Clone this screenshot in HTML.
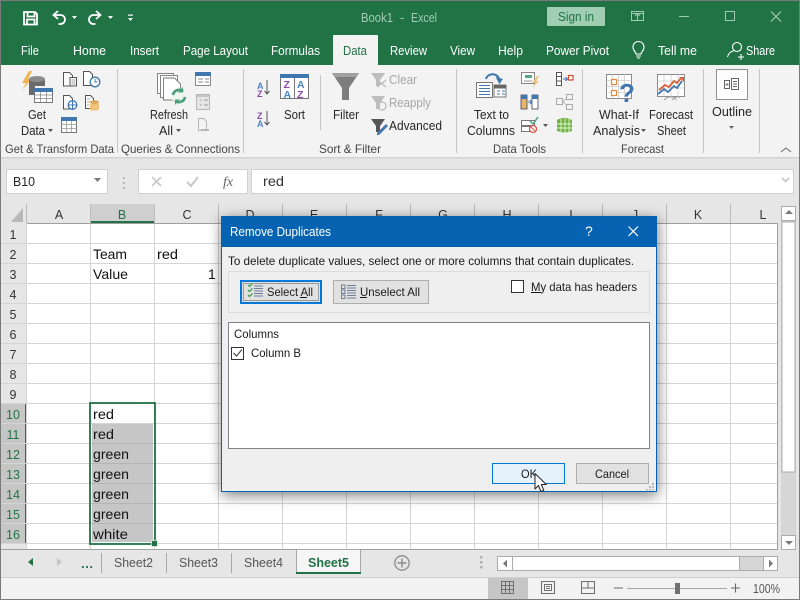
<!DOCTYPE html>
<html><head><meta charset="utf-8"><title>Book1 - Excel</title>
<style>
html,body{margin:0;padding:0;background:#e6e6e6;width:800px;height:600px;overflow:hidden}
svg{display:block;position:absolute;left:0;top:0}
text{font-family:"Liberation Sans",sans-serif;font-size:12.5px;fill:#262626;white-space:pre}
.t{fill:#fff}
.l{fill:#444}
.c{font-size:14px;fill:#111}
.h{fill:#333;text-anchor:middle;font-size:12.5px}
.g{fill:#a6a6a6}
.d{fill:#1a1a1a;font-size:12px}
</style></head><body>
<svg width="800" height="600" viewBox="0 0 800 600" xmlns="http://www.w3.org/2000/svg">
<!-- backgrounds -->
<rect width="800" height="600" fill="#e6e6e6"/>
<rect width="800" height="65" fill="#217346"/>
<rect y="65" width="800" height="92" fill="#f3f3f3"/>
<rect y="157" width="800" height="1.5" fill="#d2d2d2"/>
<rect x="333" y="35" width="45" height="30" fill="#f3f3f3"/>

<!-- QAT -->
<g fill="none" stroke="#fff" stroke-width="1.8">
<path d="M24 12h11l2 2v10.500H24z"/><path d="M27.500 12.500v4h7v-4M27 24.500v-5h7.500v5"/>
<path d="M58 11l-4.500 4 4.500 4M54 15h6.500a4.500 4.500 0 0 1 0 9h-2"/>
<path d="M96 11l4.500 4-4.500 4M100 15h-6.500a4.500 4.500 0 0 0 0 9h2"/>
</g>
<path d="M72 16h5l-2.500 3zM108 16h5l-2.500 3zM128 18h5l-2.500 3z" fill="#fff"/>
<rect x="128" y="14.500" width="5" height="1.200" fill="#fff"/>

<!-- title -->
<text x="361" y="22" textLength="32" lengthAdjust="spacingAndGlyphs" style="fill:#a3ccb5;font-size:13px">Book1</text>
<text x="400" y="22" style="fill:#a3ccb5;font-size:13px">-</text>
<text x="411" y="22" textLength="26" lengthAdjust="spacingAndGlyphs" style="fill:#a3ccb5;font-size:13px">Excel</text>
<rect x="547" y="7" width="58" height="19" rx="1" fill="#a0ceb3"/>
<text x="558" y="21" textLength="36" lengthAdjust="spacingAndGlyphs" style="fill:#217346;font-size:13px">Sign in</text>
<g fill="none" stroke="#a3ccb5" stroke-width="1">
<rect x="631.500" y="11.500" width="12" height="9"/><path d="M637.500 20v-6M635 16l2.500-2.500 2.500 2.500M631.500 13.500h12"/>
<path d="M679 16.500h10"/><rect x="725.500" y="11.500" width="9" height="9"/>
<path d="M771 11.500l10 10M781 11.500l-10 10" stroke-width="1.200"/>
</g>

<!-- tabs -->
<text class="t" x="21" y="55" textLength="18" lengthAdjust="spacingAndGlyphs" style="font-size:12.5px">File</text>
<text class="t" x="73" y="55" textLength="33" lengthAdjust="spacingAndGlyphs" style="font-size:12.5px">Home</text>
<text class="t" x="130" y="55" textLength="29" lengthAdjust="spacingAndGlyphs" style="font-size:12.5px">Insert</text>
<text class="t" x="183" y="55" textLength="65" lengthAdjust="spacingAndGlyphs" style="font-size:12.5px">Page Layout</text>
<text class="t" x="271" y="55" textLength="49" lengthAdjust="spacingAndGlyphs" style="font-size:12.5px">Formulas</text>
<text x="343" y="55" textLength="24" lengthAdjust="spacingAndGlyphs" style="fill:#217346;font-size:12.5px">Data</text>
<text class="t" x="390" y="55" textLength="37" lengthAdjust="spacingAndGlyphs" style="font-size:12.5px">Review</text>
<text class="t" x="450" y="55" textLength="25" lengthAdjust="spacingAndGlyphs" style="font-size:12.5px">View</text>
<text class="t" x="498" y="55" textLength="25" lengthAdjust="spacingAndGlyphs" style="font-size:12.5px">Help</text>
<text class="t" x="546" y="55" textLength="63" lengthAdjust="spacingAndGlyphs" style="font-size:12.5px">Power Pivot</text>
<text class="t" x="658" y="55" textLength="39" lengthAdjust="spacingAndGlyphs" style="font-size:12.5px">Tell me</text>
<text class="t" x="746" y="55" textLength="29" lengthAdjust="spacingAndGlyphs" style="font-size:12.5px">Share</text>
<g fill="none" stroke="#fff" stroke-width="1.100">
<path d="M636 54c0-2-3-3-3-7a5.500 5.500 0 0 1 11 0c0 4-3 5-3 7zM636 56h5M637 58h3"/>
<circle cx="737" cy="47" r="4.500"/><path d="M727.500 57c1-4 3.500-5.500 6-6M741 54v6M738 57h6"/>
</g>

<!-- group separators -->
<g fill="#c6c6c6">
<rect x="117" y="69" width="1" height="84"/><rect x="243" y="69" width="1" height="84"/>
<rect x="456" y="69" width="1" height="84"/><rect x="582" y="69" width="1" height="84"/>
<rect x="703" y="69" width="1" height="84"/><rect x="759" y="69" width="1" height="84"/>
<rect x="320" y="75" width="1" height="55"/>
</g>

<!-- Get & Transform -->
<path d="M29 71l-7 12h4l-4 7 10-11h-4l4-8z" fill="#f0b454"/>
<path d="M29 79v16h6V86h10v-6c0-4-16-4-16 0z" fill="#6b6b6b"/>
<ellipse cx="37" cy="79" rx="8" ry="3" fill="#8c8c8c"/>
<rect x="34.500" y="88.500" width="18" height="14" fill="#fff" stroke="#777"/>
<rect x="34" y="88" width="19" height="4" fill="#3f77ae"/>
<path d="M34.500 95h18M34.500 98.500h18M40.500 92v10M46.500 92v10" stroke="#888" stroke-width=".8" fill="none"/>
<g fill="#fff" stroke="#555" stroke-width="1">
<path d="M63.500 72.500h6l3 3v10.500h-9z"/><rect x="70" y="77.500" width="6.500" height="8.500"/>
<path d="M83.500 71.500h6l3 3v11h-9z"/>
<path d="M63.500 95.500h6l3 3v10.500h-9z"/>
<path d="M85.500 95.500h5l3 3v10h-8z"/>
</g>
<path d="M71.500 80h4M71.500 82h4M71.500 84h4M87 99h3M87 102h3M87 105h2" stroke="#888" stroke-width=".8"/>
<circle cx="95" cy="82" r="4.800" fill="#fff" stroke="#3f77ae" stroke-width="1.300"/><path d="M95 79v3h2.500" stroke="#3f77ae" fill="none"/>
<circle cx="72.500" cy="105" r="4.300" fill="#fff" stroke="#3f77ae" stroke-width="1.300"/><path d="M68 105h9M72.500 100.500v9" stroke="#3f77ae"/>
<rect x="90" y="103" width="9" height="7.500" rx="1.500" fill="#eec17a"/><ellipse cx="94.500" cy="102" rx="4.500" ry="1.700" fill="#d9a75c"/>
<rect x="61.500" y="117.500" width="15" height="15" fill="#fff" stroke="#777"/><rect x="61" y="117" width="16" height="4" fill="#3f77ae"/>
<path d="M61.500 124.500h15M61.500 128.500h15M66.500 121v11M71.500 121v11" stroke="#999" stroke-width=".8"/>
<text x="28" y="119" textLength="18" lengthAdjust="spacingAndGlyphs">Get</text>
<text x="21" y="135" textLength="24" lengthAdjust="spacingAndGlyphs">Data</text>
<path d="M48 129h5l-2.500 3z" fill="#555"/>
<text class="l" x="5" y="153" textLength="109" lengthAdjust="spacingAndGlyphs" style="font-size:12px">Get &amp; Transform Data</text>

<!-- Queries -->
<g fill="#fff" stroke="#777" stroke-width=".9">
<rect x="157.500" y="73.500" width="16" height="20"/><rect x="160.500" y="75.500" width="17" height="22"/>
<path d="M163.500 78h11l6 6v16h-17z"/>
</g>
<circle cx="179" cy="96" r="7.500" fill="#eef5ef"/><path d="M173 95a6 6 0 0 1 10-3.500M185 97a6 6 0 0 1-10 3.500" fill="none" stroke="#49a078" stroke-width="2.600"/>
<path d="M183 87v5.500h-5zM175 105v-5.500h5z" fill="#49a078"/>
<rect x="195.500" y="72.500" width="15" height="13" fill="#fff" stroke="#888"/><rect x="195" y="72" width="16" height="4" fill="#3f77ae"/>
<path d="M198 79h5M198 82h5M205 79h4M205 82h4" stroke="#888"/>
<rect x="196.500" y="94.500" width="13" height="15" fill="#e6e6e6" stroke="#b5b5b5"/><path d="M200 100h1.500M204 100h4M200 105h1.500M204 105h4" stroke="#999"/><rect x="197" y="95" width="12" height="2" fill="#c6c6c6"/>
<path d="M198.500 118.500h5l3 3v9h-8z" fill="#f3f3f3" stroke="#b5b5b5"/>
<path d="M201 130h4M205 130h4" stroke="#b5b5b5" stroke-width="2" fill="none"/>
<text x="150" y="119" textLength="38" lengthAdjust="spacingAndGlyphs">Refresh</text>
<text x="159" y="135" textLength="14" lengthAdjust="spacingAndGlyphs">All</text>
<path d="M176 129h5l-2.500 3z" fill="#555"/>
<text class="l" x="121" y="153" textLength="119" lengthAdjust="spacingAndGlyphs" style="font-size:12px">Queries &amp; Connections</text>

<!-- Sort -->
<text x="257" y="89" style="font-size:9px;fill:#4c86c6;font-weight:bold">A</text>
<text x="257" y="97" style="font-size:9px;fill:#8a4ca8;font-weight:bold">Z</text>
<path d="M267 80v13M264.500 91l2.500 3 2.500-3" fill="none" stroke="#555"/>
<text x="257" y="119" style="font-size:9px;fill:#8a4ca8;font-weight:bold">Z</text>
<text x="257" y="127" style="font-size:9px;fill:#4c86c6;font-weight:bold">A</text>
<path d="M267 111v13M264.500 122l2.500 3 2.500-3" fill="none" stroke="#555"/>
<rect x="280.500" y="74.500" width="28" height="24" fill="#fff" stroke="#777"/><rect x="280" y="74" width="29" height="4" fill="#3f77ae"/><path d="M294.500 78v20" stroke="#777"/>
<text x="283.500" y="88" style="font-size:10.500px;fill:#8a4ca8;font-weight:bold">Z</text>
<text x="283.500" y="98" style="font-size:10.500px;fill:#4c86c6;font-weight:bold">A</text>
<text x="297" y="88" style="font-size:10.500px;fill:#4c86c6;font-weight:bold">A</text>
<text x="297" y="98" style="font-size:10.500px;fill:#8a4ca8;font-weight:bold">Z</text>
<text x="284" y="119" textLength="21" lengthAdjust="spacingAndGlyphs">Sort</text>
<!-- Filter -->
<path d="M332 73h27l-10 15v12h-7V88z" fill="#7d7d7d"/><path d="M332 73h27l-2.500 4h-22z" fill="#a0a0a0"/>
<text x="333" y="119" textLength="26" lengthAdjust="spacingAndGlyphs">Filter</text>
<path d="M371 73h14l-5 7v6h-4v-6z" fill="#bdbdbd"/><path d="M377 80l9 7M386 80l-9 7" stroke="#bdbdbd" stroke-width="1.300"/>
<text class="g" x="389" y="84" textLength="28" lengthAdjust="spacingAndGlyphs">Clear</text>
<path d="M371 96h14l-5 7v6h-4v-6z" fill="#bdbdbd"/><circle cx="382" cy="106" r="4" fill="none" stroke="#bdbdbd" stroke-width="1.300"/>
<text class="g" x="389" y="107" textLength="42" lengthAdjust="spacingAndGlyphs">Reapply</text>
<path d="M371 119h14l-5 7v6h-4v-6z" fill="#555"/><path d="M377 133l9-9 2 2-9 9h-2z" fill="#3f77ae"/>
<text x="389" y="130" textLength="53" lengthAdjust="spacingAndGlyphs">Advanced</text>
<text class="l" x="319" y="153" textLength="62" lengthAdjust="spacingAndGlyphs" style="font-size:12px">Sort &amp; Filter</text>

<!-- Data tools -->
<rect x="476.500" y="82.500" width="16" height="15" fill="#fff" stroke="#777"/>
<path d="M479 85.500h11M479 88.500h11M479 91.500h11M479 94.500h11" stroke="#3f77ae"/>
<rect x="494" y="85" width="12" height="12" fill="#fff" stroke="#777"/><rect x="494" y="85" width="12.500" height="3.500" fill="#666"/>
<path d="M497 91h3M502 91h3M497 94h3M502 94h3" stroke="#3f77ae"/>
<path d="M486 79c1-5 9-7 13-1" fill="none" stroke="#3f77ae" stroke-width="2"/><path d="M495 78h7.500l-2 6z" fill="#3f77ae" transform="rotate(15 499 80)"/>
<rect x="521.500" y="72.500" width="13" height="11" fill="#fff" stroke="#888"/><rect x="525" y="75" width="7" height="3" fill="#5aa58a"/><path d="M524 81h8" stroke="#999"/><path d="M537 76l-5 7h3l-3 5 7-7h-3l3-5z" fill="#eec17a"/>
<rect x="521" y="95" width="6" height="14" fill="#e5b569" stroke="#445" stroke-width=".8"/><rect x="521" y="95" width="6" height="4" fill="#3f77ae"/>
<rect x="532" y="95" width="6" height="14" fill="#fff" stroke="#445" stroke-width=".8"/><rect x="532" y="95" width="6" height="4" fill="#3f77ae"/>
<path d="M528 102h3M530 100l2 2-2 2" stroke="#3f77ae" fill="none"/>
<rect x="521.500" y="120.500" width="13" height="5" fill="#fff" stroke="#777"/><rect x="521.500" y="126.500" width="8" height="5" fill="#fff" stroke="#777"/>
<path d="M530 121l3 3 5-7" fill="none" stroke="#4c9f7a" stroke-width="1.500"/>
<circle cx="533" cy="129" r="3.500" fill="#fff" stroke="#d8544a" stroke-width="1.300"/><path d="M531 127l4 4" stroke="#d8544a"/>
<path d="M543 124h5l-2.500 3z" fill="#555"/>
<rect x="556.500" y="72.500" width="5" height="13" fill="#fff" stroke="#555"/><path d="M556.500 76.500h5M556.500 81h5" stroke="#555"/>
<path d="M563 79h4M565.500 77l2 2-2 2" stroke="#3f77ae" fill="none"/><rect x="568.500" y="75.500" width="4.500" height="4.500" fill="#fff" stroke="#d14b2c" stroke-width="1.200"/>
<path d="M563 102l6-6M563 102l6 5" stroke="#bbb"/><rect x="556.500" y="98.500" width="6" height="6" fill="#f3f3f3" stroke="#aaa"/><rect x="566.500" y="94.500" width="6" height="5" fill="#f3f3f3" stroke="#aaa"/><rect x="566.500" y="104.500" width="6" height="5" fill="#f3f3f3" stroke="#aaa"/>
<path d="M557 120q7-4 15 0v11q-7 3-15 0z" fill="#6db33f"/><path d="M561 119v13M565 118.500v14M569 119v13M557 124h15M557 128h15" stroke="#e7f3dc" stroke-width=".9"/>
<text x="474" y="119" textLength="35" lengthAdjust="spacingAndGlyphs">Text to</text>
<text x="467" y="135" textLength="48" lengthAdjust="spacingAndGlyphs">Columns</text>
<text class="l" x="493" y="153" textLength="53" lengthAdjust="spacingAndGlyphs" style="font-size:12px">Data Tools</text>

<!-- Forecast -->
<rect x="606.500" y="74.500" width="25" height="24" fill="#fff" stroke="#8a8a8a"/>
<path d="M606.500 80.500h25M606.500 86.500h25M606.500 92.500h25M612.500 74.500v24M618.500 74.500v24M624.500 74.500v24" stroke="#ccc" stroke-width=".8"/>
<rect x="611.500" y="79.500" width="5" height="5" fill="#fff" stroke="#e08b3e" stroke-width="1.200"/><rect x="611.500" y="90.500" width="5" height="5" fill="#fff" stroke="#e08b3e" stroke-width="1.200"/>
<text x="619" y="102" style="font-size:26px;font-weight:bold;fill:#3f77ae">?</text>
<rect x="657.500" y="74.500" width="27" height="22" fill="#fff" stroke="#8a8a8a"/>
<path d="M657.500 81h27M657.500 88h27M664 74.500v22M671 74.500v22M678 74.500v22" stroke="#ccc" stroke-width=".8"/>
<path d="M658 94l6-5 4 3 6-6 3 2 5-7" fill="none" stroke="#3f77ae" stroke-width="1.800"/>
<path d="M659 90l6-5 4 2 5-6 3 2 4-5" fill="none" stroke="#d8623a" stroke-width="1.800"/>
<path d="M679 77h5v5z" fill="#d8623a"/>
<path d="M664 100l4-3h6l2 3M672 100l4-3h4" fill="none" stroke="#9a9a9a"/>
<text x="599" y="119" textLength="40" lengthAdjust="spacingAndGlyphs">What-If</text>
<text x="593" y="135" textLength="47" lengthAdjust="spacingAndGlyphs">Analysis</text>
<path d="M641 129h5l-2.500 3z" fill="#555"/>
<text x="649" y="119" textLength="44" lengthAdjust="spacingAndGlyphs">Forecast</text>
<text x="657" y="135" textLength="29" lengthAdjust="spacingAndGlyphs">Sheet</text>
<text class="l" x="621" y="153" textLength="43" lengthAdjust="spacingAndGlyphs" style="font-size:12px">Forecast</text>

<!-- Outline -->
<rect x="716.500" y="69.500" width="31" height="30" fill="#fdfdfd" stroke="#8f8f8f"/>
<rect x="724.500" y="80.500" width="5" height="8" fill="#fff" stroke="#666"/><path d="M725.500 84.500h3M727 83v3" stroke="#666" stroke-width=".8"/>
<rect x="731.500" y="78.500" width="7" height="11" fill="#fff" stroke="#666"/><path d="M733 81.500h4M733 84h4M733 86.500h4" stroke="#666"/>
<text x="712" y="116" textLength="40" lengthAdjust="spacingAndGlyphs">Outline</text>
<path d="M729 126h5l-2.500 3z" fill="#666"/>
<path d="M781 152l5-4 5 4" fill="none" stroke="#666"/>

<!-- formula bar -->
<rect x="6.500" y="169.500" width="101" height="24" fill="#fff" stroke="#d0d0d0"/>
<text x="13" y="186" textLength="22" lengthAdjust="spacingAndGlyphs" style="font-size:13px">B10</text>
<path d="M94 178h7l-3.500 4z" fill="#7a7a7a"/>
<path d="M123 177h1.500v2H123zM123 182h1.500v2H123zM123 187h1.500v2H123z" fill="#aaa"/>
<rect x="138.500" y="169.500" width="109" height="24" fill="#fff" stroke="#d0d0d0"/>
<path d="M152 177l9 9M161 177l-9 9" stroke="#c8c8c8" stroke-width="1.600"/>
<path d="M187 182l4 4 7-9" fill="none" stroke="#c8c8c8" stroke-width="2"/>
<text x="223" y="186" style="font-family:'Liberation Serif',serif;font-style:italic;font-size:14px;fill:#666">fx</text>
<rect x="251.500" y="169.500" width="542" height="24" fill="#fff" stroke="#d0d0d0"/>
<text x="263" y="186" textLength="21" lengthAdjust="spacingAndGlyphs" style="font-size:14px;fill:#333">red</text>
<path d="M782 178l3.500 3.500 3.500-3.500" fill="none" stroke="#c8c8c8" stroke-width="1.800"/>

<!-- grid -->
<rect x="0" y="204" width="778" height="345" fill="#e6e6e6"/>
<rect x="27" y="224" width="751" height="325" fill="#fff"/>
<path d="M23 208v14H11z" fill="#b8b8b8"/>
<rect x="90" y="204" width="65" height="19" fill="#cfcfcf"/>
<rect x="90" y="221" width="65" height="2" fill="#217346"/>
<rect x="0" y="403" width="26" height="141" fill="#c6c6c6"/>
<rect x="25" y="403" width="2" height="141" fill="#217346"/>
<g stroke="#d4d4d4" stroke-width="1" fill="none">
<path d="M26.500 224V549M90.500 224V549M154.500 224V549M218.500 224V549M282.500 224V549M346.500 224V549M410.500 224V549M474.500 224V549M538.500 224V549M602.500 224V549M666.500 224V549M730.500 224V549"/>
<path d="M0 243.500H778M0 263.500H778M0 283.500H778M0 303.500H778M0 323.500H778M0 343.500H778M0 363.500H778M0 383.500H778M0 403.500H778M0 423.500H778M0 443.500H778M0 463.500H778M0 483.500H778M0 503.500H778M0 523.500H778M0 543.500H778"/>
</g>
<path d="M26.500 204V223M90.500 204V223M154.500 204V223M218.500 204V223M282.500 204V223M346.500 204V223M410.500 204V223M474.500 204V223M538.500 204V223M602.500 204V223M666.500 204V223M730.500 204V223" stroke="#bbb" fill="none"/>
<rect x="27" y="223" width="751" height="1" fill="#9f9f9f"/>
<rect x="777" y="223" width="1" height="326" fill="#9f9f9f"/>
<rect x="0" y="549" width="778" height="1" fill="#9f9f9f"/>
<text class="h" x="59" y="219">A</text><text class="h" x="122" y="219" style="fill:#217346">B</text><text class="h" x="187" y="219">C</text><text class="h" x="250" y="219">D</text><text class="h" x="314" y="219">E</text><text class="h" x="379" y="219">F</text><text class="h" x="443" y="219">G</text><text class="h" x="507" y="219">H</text><text class="h" x="571" y="219">I</text><text class="h" x="635" y="219">J</text><text class="h" x="698" y="219">K</text><text class="h" x="763" y="219">L</text>
<text class="h" x="13" y="239">1</text><text class="h" x="13" y="259">2</text><text class="h" x="13" y="279">3</text><text class="h" x="13" y="299">4</text><text class="h" x="13" y="319">5</text><text class="h" x="13" y="339">6</text><text class="h" x="13" y="359">7</text><text class="h" x="13" y="379">8</text><text class="h" x="13" y="399">9</text>
<text class="h" x="13" y="419" style="fill:#217346">10</text><text class="h" x="13" y="439" style="fill:#217346">11</text><text class="h" x="13" y="459" style="fill:#217346">12</text><text class="h" x="13" y="479" style="fill:#217346">13</text><text class="h" x="13" y="499" style="fill:#217346">14</text><text class="h" x="13" y="519" style="fill:#217346">15</text><text class="h" x="13" y="539" style="fill:#217346">16</text>
<!-- selection -->
<rect x="92" y="424" width="61" height="118" fill="#c6c6c6"/>
<path d="M92 443.500h61M92 463.500h61M92 483.500h61M92 503.500h61M92 523.500h61" stroke="#b4b4b4"/>
<rect x="90" y="403" width="65" height="141" fill="none" stroke="#217346" stroke-width="1.800"/>
<rect x="151.500" y="540.500" width="6" height="6" fill="#217346" stroke="#fff" stroke-width=".6"/>
<text class="c" x="93" y="259" textLength="34" lengthAdjust="spacingAndGlyphs">Team</text>
<text class="c" x="157" y="259" textLength="21" lengthAdjust="spacingAndGlyphs">red</text>
<text class="c" x="93" y="279" textLength="35" lengthAdjust="spacingAndGlyphs">Value</text>
<text class="c" x="208" y="279">1</text>
<text class="c" x="93" y="419" textLength="21" lengthAdjust="spacingAndGlyphs">red</text>
<text class="c" x="93" y="439" textLength="21" lengthAdjust="spacingAndGlyphs">red</text>
<text class="c" x="93" y="459" textLength="36" lengthAdjust="spacingAndGlyphs">green</text>
<text class="c" x="93" y="479" textLength="36" lengthAdjust="spacingAndGlyphs">green</text>
<text class="c" x="93" y="499" textLength="36" lengthAdjust="spacingAndGlyphs">green</text>
<text class="c" x="93" y="519" textLength="36" lengthAdjust="spacingAndGlyphs">green</text>
<text class="c" x="93" y="539" textLength="35" lengthAdjust="spacingAndGlyphs">white</text>

<!-- vertical scrollbar -->
<rect x="781" y="206" width="15" height="343" fill="#d6d6d6"/>
<rect x="781.500" y="206.500" width="14" height="14" fill="#fff" stroke="#ababab"/>
<path d="M785 214h8l-4-4z" fill="#7a7a7a"/>
<rect x="782" y="222" width="13" height="250" fill="#fff" stroke="#ababab"/>
<rect x="781.500" y="535.500" width="14" height="14" fill="#fff" stroke="#ababab"/>
<path d="M785 541h8l-4 4z" fill="#7a7a7a"/>

<!-- sheet tabs -->
<rect x="0" y="550" width="800" height="27" fill="#e6e6e6"/>
<rect x="0" y="577" width="800" height="1" fill="#cfcfcf"/>
<rect x="0" y="578" width="800" height="22" fill="#f2f2f2"/>
<path d="M33 558v8l-5-4z" fill="#217346"/><path d="M57 558v8l5-4z" fill="#c4c4c4"/>
<text x="81" y="568" style="font-weight:bold;fill:#217346;font-size:13px" textLength="12">...</text>
<path d="M101.500 553v20M166.500 553v20M231.500 553v20" stroke="#a8a8a8"/>
<text x="114" y="567" textLength="39" lengthAdjust="spacingAndGlyphs" style="fill:#555;font-size:13px">Sheet2</text>
<text x="179" y="567" textLength="39" lengthAdjust="spacingAndGlyphs" style="fill:#555;font-size:13px">Sheet3</text>
<text x="244" y="567" textLength="39" lengthAdjust="spacingAndGlyphs" style="fill:#555;font-size:13px">Sheet4</text>
<path d="M296.500 574V549.500H360.500V574" fill="#f6f6f6" stroke="#a8a8a8"/>
<rect x="296" y="572" width="65" height="2" fill="#217346"/>
<text x="308" y="567" textLength="41" lengthAdjust="spacingAndGlyphs" style="fill:#217346;font-weight:bold;font-size:13px">Sheet5</text>
<circle cx="402" cy="563" r="7.200" fill="none" stroke="#8a8a8a" stroke-width="1.300"/><path d="M402 558.500v9M397.500 563h9" stroke="#8a8a8a" stroke-width="1.400"/>
<path d="M480 556h2.500v2.500H480zM480 561h2.500v2.500H480zM480 566h2.500v2.500H480z" fill="#b0b0b0"/>

<!-- horizontal scrollbar -->
<rect x="497.500" y="556.500" width="280" height="14" fill="#d6d6d6" stroke="#ababab"/>
<rect x="498" y="557" width="14" height="13" fill="#fff"/>
<path d="M507 559.500v8l-4-4z" fill="#7a7a7a"/>
<rect x="512.500" y="556.500" width="227" height="14" fill="#fff" stroke="#ababab"/>
<rect x="763.500" y="556.500" width="14" height="14" fill="#fff" stroke="#ababab"/>
<path d="M769 559.500v8l4-4z" fill="#7a7a7a"/>

<!-- status bar -->
<rect x="488" y="578" width="40" height="21" fill="#c6c6c6"/>
<g fill="none" stroke="#707070">
<rect x="501.500" y="581.500" width="12" height="12"/><path d="M505.500 581.500v12M509.500 581.500v12M501.500 585.500h12M501.500 589.500h12"/>
<rect x="541.500" y="581.500" width="13" height="12"/><rect x="544.500" y="584.500" width="7" height="6"/><path d="M546 586.500h4M546 588.500h4"/>
<path d="M581.500 581.500h13v12h-13zM588 581.500v6.500h-6.500M588 588h6.500"/>
</g>
<path d="M614 588h9M731 588h9M735.500 583.500v9" stroke="#666" stroke-width="1.100"/>
<rect x="627" y="588" width="100" height="1" fill="#a8a8a8"/>
<rect x="675" y="583" width="5" height="11" fill="#707070"/>
<text x="753" y="593" textLength="27" lengthAdjust="spacingAndGlyphs" style="fill:#555;font-size:12.5px">100%</text>

<!-- dialog -->
<rect x="221" y="216" width="436" height="276" fill="#222" style="filter:blur(7px)" opacity=".6" transform="translate(1,3)"/>
<rect x="221.500" y="216.500" width="435" height="275" fill="#efefef" stroke="#0563b1"/>
<rect x="221" y="216" width="436" height="31" fill="#0563b1"/>
<text class="t" x="230" y="236" textLength="101" lengthAdjust="spacingAndGlyphs" style="font-size:13px">Remove Duplicates</text>
<text class="t" x="585" y="236" style="font-size:14px">?</text>
<path d="M628.500 226.500l9.500 9.500M638 226.500l-9.500 9.500" stroke="#fff" stroke-width="1.200"/>
<text class="d" x="228" y="265" textLength="406" lengthAdjust="spacingAndGlyphs">To delete duplicate values, select one or more columns that contain duplicates.</text>
<rect x="228.500" y="271.500" width="421" height="41" fill="#efefef" stroke="#dcdcdc"/>
<!-- select all -->
<rect x="241" y="281" width="80" height="22" fill="#e1e1e1" stroke="#0078d7" stroke-width="2"/>
<rect x="243.500" y="283.500" width="75" height="17" fill="none" stroke="#222" stroke-width=".7" stroke-dasharray="1 1"/>
<path d="M248 285l1.500 1.500 3-3M248 290l1.500 1.500 3-3M248 295l1.500 1.500 3-3" fill="none" stroke="#3fa34d" stroke-width="1.300"/>
<path d="M254 286h9M254 288.500h9M254 291h9M254 293.500h9M254 296h9" stroke="#6e7f99" stroke-width=".9"/>
<text class="d" x="267" y="296" textLength="46" lengthAdjust="spacingAndGlyphs">Select All</text>
<path d="M300 297.500h7" stroke="#1a1a1a"/>
<!-- unselect -->
<rect x="333.500" y="280.500" width="95" height="23" fill="#e1e1e1" stroke="#adadad"/>
<rect x="341.500" y="285" width="3.500" height="3.500" fill="none" stroke="#6e7f99"/><rect x="341.500" y="290" width="3.500" height="3.500" fill="none" stroke="#6e7f99"/><rect x="341.500" y="295" width="3.500" height="3.500" fill="none" stroke="#6e7f99"/>
<path d="M347 285.500h9M347 288h9M347 290.500h9M347 293h9M347 295.500h9M347 298h9" stroke="#6e7f99" stroke-width=".9"/>
<text class="d" x="360" y="296" textLength="60" lengthAdjust="spacingAndGlyphs">Unselect All</text>
<path d="M360 297.500h7" stroke="#1a1a1a"/>
<rect x="511.500" y="280.500" width="12" height="12" fill="#fff" stroke="#333"/>
<text class="d" x="531" y="291" textLength="106" lengthAdjust="spacingAndGlyphs">My data has headers</text>
<path d="M531 292.500h10" stroke="#1a1a1a"/>
<!-- list -->
<rect x="228.500" y="322.500" width="421" height="126" fill="#fff" stroke="#82828f"/>
<text class="d" x="234" y="338" textLength="45" lengthAdjust="spacingAndGlyphs">Columns</text>
<rect x="231.500" y="347.500" width="12" height="12" fill="#fff" stroke="#333"/>
<path d="M233.500 353l3 3 5.500-6.500" fill="none" stroke="#555" stroke-width="1.300"/>
<text class="d" x="251" y="357" textLength="50" lengthAdjust="spacingAndGlyphs">Column B</text>
<!-- buttons -->
<rect x="492.500" y="463.500" width="72" height="20" fill="#e5f1fb" stroke="#0078d7"/>
<text class="d" x="521" y="478" textLength="16" lengthAdjust="spacingAndGlyphs">OK</text>
<rect x="576.500" y="463.500" width="72" height="20" fill="#e1e1e1" stroke="#adadad"/>
<text class="d" x="595" y="478" textLength="34" lengthAdjust="spacingAndGlyphs">Cancel</text>
<path d="M652 483h2v2h-2zM649 486h2v2h-2zM652 486h2v2h-2zM646 489h2v1.500h-2zM649 489h2v1.500h-2zM652 489h2v1.500h-2z" fill="#b8b8b8"/>
<path d="M535 473.500v15.500l3.500-3.500 2.500 6 2.800-1.200-2.500-5.800h5z" fill="#fff" stroke="#222" stroke-width="1" stroke-linejoin="round"/>

<rect x=".5" y=".5" width="799" height="599" fill="none" stroke="#7a7a7a"/>
</svg>
</body></html>
